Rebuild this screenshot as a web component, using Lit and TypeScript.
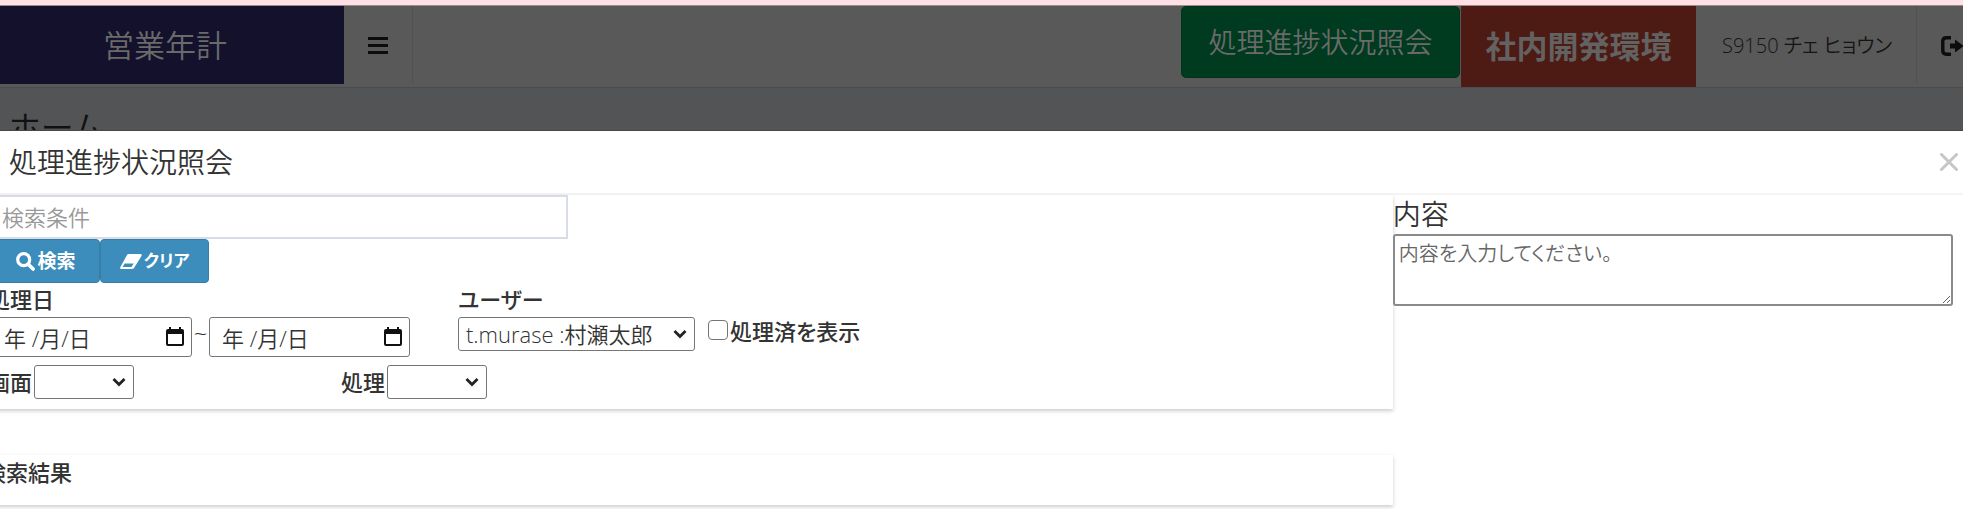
import { LitElement, html, css } from "lit";
import { customElement } from "lit/decorators.js";

const chevron = html`<svg class="chevron" viewBox="0 0 14 10" aria-hidden="true">
  <path d="M1.5 2 L7 7.5 L12.5 2" fill="none" stroke="#222" stroke-width="2.8"></path>
</svg>`;

const calendar = html`<svg class="calendar" viewBox="0 0 18 20" aria-hidden="true">
  <path d="M0 4 Q0 2 2 2 H3 V0 H5 V2 H13 V0 H15 V2 H16 Q18 2 18 4 V17 Q18 19 16 19 H2 Q0 19 0 17 Z M2 7 V17 H16 V7 Z" fill="#111" fill-rule="evenodd"></path>
</svg>`;

@customElement("app-root")
export class AppRoot extends LitElement {
  static styles = css`
    :host {
      display: block;
      min-height: 100vh;
      overflow: hidden;
      background: #fff;
      color: #333;
      font: 350 22px/32px "Open Sans", "Noto Sans CJK JP", sans-serif;
      font-feature-settings: "palt";
    }
    * { box-sizing: border-box; }
    button, input, select, textarea {
      font: inherit;
      font-feature-settings: inherit;
      color: inherit;
      margin: 0;
    }
    .strip { height: 6px; background: #ffe0e4; border-bottom: 1px solid #9b8b8d; }
    .navbar {
      display: flex;
      align-items: flex-start;
      height: 82px;
      background: #595959;
      border-bottom: 1px solid #4b4c4e;
      color: #0f0f0f;
    }
    .logo {
      display: flex;
      align-items: center;
      justify-content: center;
      width: 344px;
      height: 78px;
      padding-right: 14px;
      background: #13112c;
      color: #6a6a6a;
      font-size: 31px;
      text-decoration: none;
    }
    .menu {
      display: flex;
      align-items: center;
      justify-content: center;
      width: 69px;
      height: 78px;
      padding: 0;
      border: 0;
      border-right: 1px solid #515151;
      background: none;
    }
    .menu svg { width: 20px; height: 17px; }
    .spacer { flex: 1; }
    .progress {
      width: 279px;
      height: 72px;
      margin-right: 1px;
      padding: 0;
      border: 1px solid #00341b;
      border-radius: 5px;
      background: #003a1f;
      color: #6a6a6a;
      font-size: 28px;
    }
    .env {
      display: flex;
      align-items: center;
      justify-content: center;
      width: 235px;
      height: 81px;
      padding-bottom: 2px;
      background: #4d1a14;
      color: #626262;
      font-size: 31px;
      font-weight: 700;
    }
    .user {
      display: flex;
      align-items: center;
      width: 221px;
      height: 78px;
      padding: 2px 0 0 26px;
      border-right: 1px solid #515151;
      color: #141414;
      font-size: 20px;
      text-decoration: none;
      white-space: nowrap;
    }
    .logout {
      display: flex;
      align-items: center;
      flex: none;
      width: 46px;
      height: 78px;
      padding: 2px 0 0 24px;
      border: 0;
      background: none;
    }
    .logout svg { flex: none; width: 24px; height: 20px; }
    .page {
      height: 43px;
      padding: 20px 9px 0;
      overflow: hidden;
      background: #535456;
      border-bottom: 1px solid #47484a;
    }
    .page h1 {
      margin: 0;
      color: #111;
      font-size: 33px;
      line-height: 40px;
      font-weight: 350;
    }
    .dialog-head {
      display: flex;
      align-items: center;
      justify-content: space-between;
      height: 64px;
      padding: 0 5px 0 9px;
      border-bottom: 2px solid #f4f4f4;
    }
    .dialog-head h2 { margin: 0; font-size: 28px; font-weight: 350; }
    .close { display: flex; padding: 0; border: 0; background: none; }
    .close svg { width: 18px; height: 18px; }
    .columns { display: grid; grid-template-columns: 70.95% 1fr; align-items: start; }
    .main { margin-left: -16px; }
    .panel { box-shadow: 0 2px 4px rgba(0, 0, 0, 0.2); }
    .conditions { height: 214px; margin-bottom: 46px; }
    .search {
      display: block;
      width: 584px;
      height: 44px;
      padding: 0 16px;
      border: 2px solid #d8dce6;
      background: #fff;
    }
    .search::placeholder { color: #999; opacity: 1; }
    .buttons { display: flex; }
    .btn {
      display: flex;
      align-items: center;
      justify-content: center;
      gap: 2px;
      height: 44px;
      border: 1px solid #367fa9;
      border-radius: 4px;
      background: #3c8dbc;
      color: #fff;
      font-size: 19px;
      font-weight: 700;
    }
    .find { width: 116px; padding: 0 8px 0 16px; }
    .clear { width: 109px; font-size: 17px; }
    .find svg { width: 19px; height: 19px; }
    .clear svg { width: 22px; height: 15px; }
    label, .panel h3 { font-size: 22px; font-weight: 500; margin: 0; }
    .filters { display: flex; align-items: flex-start; padding-left: 4px; }
    .range { display: flex; width: 470px; }
    .field label, .check label { display: block; }
    .field > label { height: 34px; line-height: 32px; }
    .date-box, .pick { display: grid; align-items: center; }
    .date-box > *, .pick > * { grid-area: 1 / 1; }
    .date {
      width: 201px;
      height: 40px;
      padding: 2px 40px 0 12px;
      border: 1px solid #767676;
      border-radius: 3px;
      background: #fff;
    }
    .date::placeholder { color: #333; opacity: 1; }
    .calendar { justify-self: end; width: 18px; height: 20px; margin-right: 8px; pointer-events: none; }
    .from { margin-left: 3px; }
    .tilde { width: 17px; padding-top: 34px; text-align: center; font-size: 24px; }
    .second { padding-top: 34px; }
    select {
      appearance: none;
      height: 34px;
      padding: 0 20px 0 7px;
      border: 1px solid #767676;
      border-radius: 3px;
      background: #fff;
    }
    .chevron { justify-self: end; width: 14px; height: 10px; margin-right: 8px; pointer-events: none; }
    .owner { width: 237px; }
    .short { width: 100px; }
    .check { display: flex; align-items: center; gap: 2px; padding: 32px 0 0 13px; }
    .check input {
      appearance: none;
      width: 20px;
      height: 20px;
      margin-bottom: 2px;
      border: 1px solid #767676;
      border-radius: 4px;
      background: #fff;
    }
    .selects { display: flex; padding: 8px 0 0 4px; }
    .inline { display: flex; align-items: center; gap: 2px; width: 353px; }
    .results { height: 50px; }
    .panel h3 { line-height: 34px; }
    .content label { display: block; font-size: 28px; line-height: 39px; font-weight: 350; }
    textarea {
      display: block;
      width: calc(100% - 10px);
      height: 72px;
      padding: 2px 4px;
      border: 2px solid #8a8a8a;
      border-radius: 3px;
      background: #fff;
      font-size: 20px;
      resize: both;
    }
    textarea::placeholder { color: #666; opacity: 1; }
  `;

  render() {
    return html`
      <div class="strip"></div>
      <header class="navbar">
        <a class="logo" href="#">営業年計</a>
        <button class="menu" aria-label="メニュー">
          <svg viewBox="0 0 20 17"><path d="M0 0h20v3H0zM0 7h20v3H0zM0 14h20v3H0z" fill="#0c0c0c"></path></svg>
        </button>
        <div class="spacer"></div>
        <button class="progress">処理進捗状況照会</button>
        <div class="env">社内開発環境</div>
        <a class="user" href="#">S9150 チェ ヒョウン</a>
        <button class="logout" aria-label="ログアウト">
          <svg viewBox="0 0 24 20">
            <path d="M10 1.8H5.5Q1.8 1.8 1.8 5.5V14.5Q1.8 18.2 5.5 18.2H10" fill="none" stroke="#0c0c0c" stroke-width="3.4"></path>
            <path d="M9 7.5h5V3.5L22.5 10 14 16.5V12.5H9z" fill="#0c0c0c"></path>
          </svg>
        </button>
      </header>
      <div class="page"><h1>ホーム</h1></div>

      <section role="dialog" aria-labelledby="title">
        <div class="dialog-head">
          <h2 id="title">処理進捗状況照会</h2>
          <button class="close" aria-label="閉じる">
            <svg viewBox="0 0 18 18"><path d="M1.5 1.5l15 15M16.5 1.5l-15 15" stroke="#c6c6c6" stroke-width="3" stroke-linecap="round"></path></svg>
          </button>
        </div>
        <div class="columns">
          <div class="main">
            <div class="panel conditions">
              <input class="search" type="text" placeholder="検索条件" aria-label="検索条件">
              <div class="buttons">
                <button class="btn find">
                  <svg viewBox="0 0 19 19"><circle cx="7.7" cy="7.7" r="6" fill="none" stroke="#fff" stroke-width="3.2"></circle><path d="M12.3 12.3l4.8 4.8" stroke="#fff" stroke-width="3.6" stroke-linecap="round"></path></svg>検索
                </button>
                <button class="btn clear">
                  <svg viewBox="0 0 22 15"><path d="M8.5 0H20.5Q22.3 0 21.5 2L14 14Q13.3 15 12 15H1.2Q-.6 15 .4 13L7 1Q7.5 0 8.5 0ZM4.6 9.5L2.6 13H11.4L13.8 9.5Z" fill="#fff" fill-rule="evenodd"></path></svg>クリア
                </button>
              </div>
              <div class="filters">
                <div class="range">
                  <div class="field">
                    <label for="from">処理日</label>
                    <div class="date-box from">
                      <input class="date" id="from" type="text" placeholder="年 /月/日">${calendar}
                    </div>
                  </div>
                  <span class="tilde">~</span>
                  <div class="second">
                    <div class="date-box">
                      <input class="date" type="text" placeholder="年 /月/日" aria-label="処理日 終了">${calendar}
                    </div>
                  </div>
                </div>
                <div class="field">
                  <label for="owner">ユーザー</label>
                  <div class="pick owner">
                    <select id="owner"><option>t.murase :村瀬太郎</option></select>${chevron}
                  </div>
                </div>
                <div class="check">
                  <input id="done" type="checkbox"><label for="done">処理済を表示</label>
                </div>
              </div>
              <div class="selects">
                <div class="inline">
                  <label for="screen">画面</label>
                  <div class="pick short"><select id="screen"><option></option></select>${chevron}</div>
                </div>
                <div class="inline">
                  <label for="process">処理</label>
                  <div class="pick short"><select id="process"><option></option></select>${chevron}</div>
                </div>
              </div>
            </div>
            <div class="panel results"><h3>検索結果</h3></div>
          </div>
          <div class="content">
            <label for="body">内容</label>
            <textarea id="body" placeholder="内容を入力してください。"></textarea>
          </div>
        </div>
      </section>
    `;
  }
}
